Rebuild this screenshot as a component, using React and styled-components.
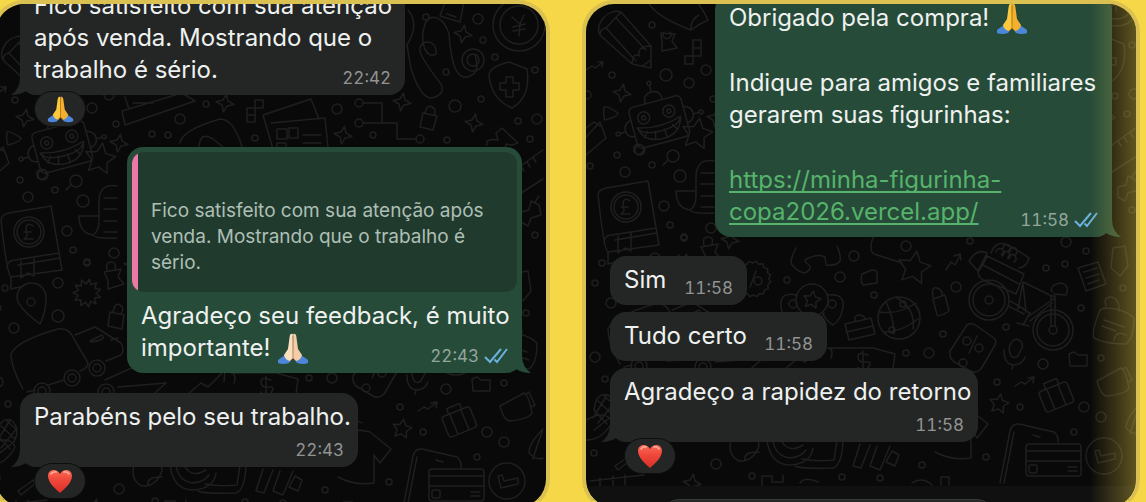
import React from "react";
import styled, { createGlobalStyle, css } from "styled-components";

const GlobalStyle = createGlobalStyle`
  *, *::before, *::after { box-sizing: border-box; }
  body {
    margin: 0;
    background: #f5d748;
    font-family: Inter, "Liberation Sans", sans-serif;
    -webkit-font-smoothing: antialiased;
  }
  p { margin: 0; }
`;

const Gallery = styled.main`
  display: grid;
  grid-template-columns: 1fr 1fr;
  gap: 32px;
  height: 100vh;
  padding-right: 6px;
  margin-left: -8px;
  overflow: hidden;
`;

const Panel = styled.section`
  position: relative;
  display: flex;
  flex-direction: column;
  height: calc(100vh + 9px);
  min-width: 0;
  border: 4px solid #dac151;
  border-bottom-color: #e8cd4c;
  border-radius: 32px;
  background: #090909;
  overflow: hidden;
`;

const Wallpaper = styled.svg`
  position: absolute;
  inset: 0;
  width: 100%;
  height: 100%;
  fill: none;
  stroke: #1f1f1f;
  stroke-width: 1.5;
  stroke-linecap: round;
  stroke-linejoin: round;
`;

const EdgeFade = styled.div`
  position: absolute;
  inset: 0 0 0 auto;
  width: 46px;
  background: linear-gradient(to right, rgba(245, 215, 72, 0), rgba(245, 215, 72, 0.36));
  pointer-events: none;
`;

const Thread = styled.div`
  position: relative;
  flex: 1;
  min-height: 0;
  display: flex;
  flex-direction: column;
  justify-content: flex-end;
  padding: 0 24px ${(p) => p.$bottom}px;
`;

const Message = styled.article`
  display: flex;
  flex-direction: column;
  align-items: ${(p) => (p.$sent ? "flex-end" : "flex-start")};
  margin-top: ${(p) => p.$gap || 20}px;
`;

const layouts = {
  overlay: css`
    display: grid;
    grid-template-columns: minmax(0, 1fr);
    > * { grid-area: 1 / 1; }
  `,
  stacked: css`
    display: grid;
    grid-template-columns: minmax(0, 1fr);
    row-gap: 5px;
  `,
  inline: css`
    display: flex;
    align-items: flex-end;
    justify-content: space-between;
  `,
};

const Bubble = styled.div`
  position: relative;
  width: ${(p) => p.$width}px;
  max-width: 100%;
  padding: ${(p) => (p.$quoted ? "5px" : "8px")} 0 7px;
  border-radius: 16px;
  background: ${(p) => (p.$sent ? "#264b39" : "#242625")};
`;

const Body = styled.div`
  padding: 0 14px;
  ${(p) => layouts[p.$layout]}
`;

const Text = styled.div`
  margin-bottom: 2px;
  color: #eef1ef;
  font-size: 24px;
  line-height: 32px;
  white-space: nowrap;

  p + p { margin-top: 33px; }
`;

const Meta = styled.footer`
  display: flex;
  align-items: center;
  gap: 5px;
  align-self: end;
  justify-self: end;
  color: ${(p) => (p.$sent ? "#93a69c" : "#929393")};
  font-size: 17px;
  line-height: 20px;
  font-variant-numeric: tabular-nums;
`;

const Link = styled.a`
  color: #57b36b;
  text-decoration: underline;
  text-decoration-thickness: 2px;
  text-underline-offset: 3px;
  text-decoration-skip-ink: none;
`;

const Quote = styled.blockquote`
  margin: 0 5px 8px;
  padding: 46px 12px 16px 19px;
  border-radius: 12px;
  background: linear-gradient(to right, #ec78a5 6px, #203b2e 6px);
  color: #aebfb5;
  font-size: 19px;
  line-height: 26px;
  white-space: nowrap;
`;

const Tail = styled.svg`
  position: absolute;
  bottom: 0;
  ${(p) => (p.$sent ? "right: -9px;" : "left: -9px; transform: scaleX(-1);")}
  width: 26px;
  height: 18px;
  fill: ${(p) => (p.$sent ? "#264b39" : "#242625")};
`;

const Reaction = styled.button`
  position: relative;
  display: flex;
  align-items: center;
  justify-content: center;
  width: 52px;
  height: 36px;
  margin: -4px 0 0 14px;
  padding: 0;
  border: 1px solid #0d0e0e;
  border-radius: 18px;
  background: #242625;
`;

const Ticks = styled.svg`
  width: 24px;
  height: 16px;
  fill: none;
  stroke: #6bb2dc;
  stroke-width: 2;
`;

const Emoji = styled.svg`
  display: inline-block;
  width: ${(p) => p.$size}px;
  height: ${(p) => p.$size}px;
  margin: -4px 0;
  vertical-align: -5px;
`;

const Composer = styled.form`
  position: relative;
  display: flex;
  height: 21px;
  padding: 13px 140px 0 74px;
  background: #101010;
`;

const Field = styled.input`
  flex: 1;
  min-width: 0;
  height: 40px;
  border: 1px solid #373838;
  border-radius: 20px;
  background: #262727;
  color: #eef1ef;
  font: inherit;
`;

const star = (x, y, r, points, inner) =>
  Array.from({ length: points * 2 }, (_, i) => {
    const a = (i * Math.PI) / points - 1.4;
    const d = i % 2 ? r * inner : r;
    return `${i ? "L" : "M"}${(x + d * Math.cos(a)).toFixed(1)} ${(y + d * Math.sin(a)).toFixed(1)}`;
  }).join("") + "Z";

const dots = [
  [86, 75, 6], [126, 70, 5], [109, 83, 5], [32, 75, 3], [72, 25, 3], [37, 155, 3], [72, 165, 3], [45, 172, 5],
  [60, 150, 5], [93, 156, 6], [100, 176, 6], [84, 206, 5], [90, 225, 3], [104, 238, 3], [131, 228, 5], [7, 95, 4],
  [197, 94, 5], [223, 79, 3], [169, 109, 3], [185, 110, 3], [133, 99, 3], [272, 113, 3], [10, 166, 3],
  [443, -8, 3], [495, -6, 5], [500, 15, 3], [490, 35, 11], [490, 35, 6], [512, 32, 3], [463, 47, 3], [552, 45, 3],
  [472, 81, 6], [498, 74, 3], [535, 96, 3], [554, 94, 5], [464, 115, 3], [547, 114, 3], [354, 84, 5], [390, 110, 3],
  [75, 258, 5], [104, 237, 3], [75, 291, 6], [31, 303, 5], [25, 379, 3], [22, 263, 3], [15, 283, 3], [15, 357, 5],
  [326, 353, 3], [349, 353, 5], [463, 364, 5], [521, 358, 3], [417, 382, 3], [440, 407, 3], [504, 407, 5],
  [521, 417, 5], [494, 432, 3], [406, 457, 3], [342, 465, 3], [300, 478, 3], [136, 464, 5], [172, 476, 3],
  [262, 477, 3], [14, 453, 3], [274, 256, 5], [260, 277, 5], [207, 280, 3], [294, 295, 3], [376, 287, 5],
  [466, 268, 3], [485, 264, 3], [501, 308, 3], [426, 327, 3], [363, 334, 3], [543, 288, 3], [552, 210, 3],
  [446, 232, 3], [486, 242, 5], [390, 241, 3], [326, 246, 5], [506, 251, 3],
];

const sparkles = [
  [42, 93], [242, 78], [480, 9], [419, 77], [491, 98], [360, 110], [150, 240], [112, 483], [136, 118],
];

function Doodles({ x, y }) {
  return (
    <Wallpaper viewBox={`${x} ${y} 550 503`} preserveAspectRatio="xMinYMin slice" aria-hidden="true">
      {dots.map(([cx, cy, r], i) => (
        <circle key={i} cx={cx} cy={cy} r={r} />
      ))}
      {sparkles.map(([cx, cy], i) => (
        <path key={i} d={star(cx, cy, 9, 4, 0.4)} />
      ))}
      {/* pencil */}
      <path d="M20 35C14 24 28 8 41 12L71 46V68L52 64L20 35M20 35Q20 29 26 28L41 12M26 28L56 61M36 18L66 50M52 64Q53 52 59 56Q57 46 71 46M62 66L71 60" />
      {/* capsule and blocks */}
      <path d="M68 2Q76 17 111 30Q119 24 128 20Q121 6 115 0M111 30Q110 20 119 15M90 32a4 4 0 1 1-6 0M81 33l14 1-3 7 5 7-15 3v-8z" />
      <path d="M113 40h8v16h-8zM113 48h8M105 56h8v8h-8zM264 83h8v14h-8zM272 75h8v8h-8zM264 90h8" />
      <path d="M6 70l6-4 3 2 7-5M18 62l5 0-1 5M24 107q2-2 14 6q0 4-13 7q-2-3-1-13zM6 137l14-15L26 138 6 155M6 128l8-6 6 4" />
      {/* robot */}
      <g transform="translate(79 121) rotate(-15)">
        <rect x="-27" y="-20" width="54" height="42" rx="5" />
        <circle cx="-14" cy="-7" r="6" /><circle cx="-14" cy="-7" r="2" />
        <circle cx="12" cy="-7" r="6" /><circle cx="12" cy="-7" r="2" />
        <path d="M-23 1Q-1 8 22 1Q18 18 0 18Q-19 18-23 1M-23 1Q-20 10 0 10Q19 10 22 1M-14 7l-4 6M-6 9l-2 8M3 9l1 9M12 7l4 6M-9-20q0-10 9-10t9 10M0-30v-7M-27-8q-8 2-8 9t8 8M27-8q8 2 8 9t-8 8M-35 2h-6M35 2h6" />
        <circle cx="0" cy="-39" r="2" /><circle cx="-43" cy="2" r="2" /><circle cx="43" cy="2" r="2" />
        <circle cx="-27" cy="22" r="5" />
      </g>
      <path d={star(117, 134, 16, 5, 0.5)} />
      <path d="M88 160l-5 5" />
      {/* book and scroll */}
      <path d="M26 188L68 181L79 245L28 252Q24 250 18 195Q18 190 26 188M24 243q0-8 8-8l44-7M28 252v12l13-3M38 236v17l7-5 6 3v-18M35 240l42-7" />
      <circle cx="46" cy="207" r="15" /><circle cx="46" cy="207" r="12" />
      <path d="M50 201q-5-4-7 1l1 9-3 3h9M41 207h7" />
      <path d="M134 161q-18-3-18 16v19q0 10-6 14q-14-2-14-19h19M110 210q2 4 24 3M121 173h13M121 184h13M121 196h13M121 207h13" />
      {/* machine, cap, calculator */}
      <path d="M139 86l60-18 13 8-70 24zM142 72l4 12M150 78h20M197 118q2-13 40-24 14 0 22 28M216 122q1-16 14-8l10 8M280 90l48-16 8 20M280 90l10 34M288 98l54-5 3 30M294 104h10v10h-10zM306 103h9v10h-9zM320 110h18M320 118h18M294 118h9v9h-9z" />
      {/* circuit */}
      <circle cx="376" cy="78" r="4" /><circle cx="376" cy="98" r="4" /><circle cx="437" cy="114" r="4" />
      <path d="M380 78h19v20M380 98h34v16h19" />
      {/* cord, receipt, coin, shield */}
      <path d="M425-15q12 14-1 35l4 24q10 30 21 29 14-4 9-14-20-26-21-33c-2-12 18-13 16 3-10 6-17-12-11-30 6-12 19-7 24 10q3 46 18 43 14-3 8-22M461-20l-4 11 20 6 4-20M464-11l9 3" />
      <circle cx="536" cy="0" r="26" /><circle cx="536" cy="0" r="19" />
      <path d="M529-8l8 7 4-9M537-1l-1 12M530 2l12-3M530 6l12-2M526 37l18 7q4 28-15 39-21-9-23-33 0-8 20-13z" />
      <path d="M523 52h7v6h6v7h-6v7h-7v-7h-6v-7h6z" />
      <path d="M440 88l14 3-4 14-13-3zM442 88q2-9 7-6t2 8M504 120q-2-7 11-5l-2-7 6-5 16 15-6 2-6-1-1 6M532 145l28-20M532 172l28-18M538 141l3 5M544 137l3 5M550 132l3 5M538 187l8-2 2-9 8 4 2 10-10 3-3 8-7-4zM552 177l4-6" />
      {/* burst, place mark, small pins */}
      <path d={star(104, 268, 14, 11, 0.65)} />
      <path d="M57 299Q34 282 34 272a14 14 0 0 1 29 1q0 14-6 26z" /><circle cx="48" cy="277" r="4" />
      <path d="M127 287l14 3-2 14-14-3zM130 287q2-10 7-7t1 9M121 247l17-3-3 8 6 7-16 5v-9zM124 245q-2-8 4-8t4 7" />
      {/* lorry */}
      <path d="M40 364Q28 342 28 329q5-13 47-25 11-2 16 10l14 24q0 5-8 8M81 355l-16 5M52 365l-8 2M92 310l20-8 26 16q4 7 0 12l-15 6M107 316l12-6q5 5-11 7zM135 313l-7 2" />
      {[[89, 353], [114, 343], [59, 366], [123, 367]].map(([cx, cy]) => (
        <g key={cx}><circle cx={cx} cy={cy} r="8" /><circle cx={cx} cy={cy} r="4" /></g>
      ))}
      <path d="M122 355l40-18M135 362l48-4-20 18M204 370l14-12 7 4 14-14M230 347l12-1-1 11M251 358q3-9-3-10h45l22 6-4 30M288 355q-10-4-10 2t8 5 0 8q-6 1-8-3M283 351v22" />
      {/* corn */}
      <path d="M14 410q2-18 14-15 10 8 3 22L14 430M6 420q20-11 26 2Q23 440 6 440M14 410l13 14M18 401l14 13M24 396l9 8M27 395l-14 23M34 403l-16 20" />
      {/* badges and pins */}
      <path d={star(173, 279, 18, 16, 0.88)} /><circle cx="178" cy="281" r="4" /><path d="M170 287l6-16" />
      <circle cx="232" cy="300" r="16" /><path d={star(232, 300, 9, 5, 0.5)} />
      <path d="M217 295q-18-4-16 12 1 12 14 20M247 295q18-2 16 12-2 13-10 18-8-5-10-12M218 312q6 9 14 10t12-9" /><circle cx="213" cy="304" r="4" /><circle cx="252" cy="304" r="4" />
      <path d="M265 324l26-6 4 16-26 6zM266 332l27-6M275 321q-1-6 4-6t6 4" />
      <path d="M216 248q-8 15-3 18 5 6 12 7 6-3 5-7-5-4-5-6 12-7 20-3l1 8q11 1 14-4 1-7-3-15M282 274l10-4q5 0 5 3v10l-14 2q-3-4-1-11M294 235q-6 15 0 19l28 9" />
      <path d={star(334, 268, 17, 5, 0.5)} />
      <circle cx="319" cy="318" r="21" /><path d="M306 302q8 16 8 32M316 297q20 12 17 32M300 312q18 3 36-9M304 332q18 0 34-13" />
      <circle cx="323" cy="304" r="3" /><circle cx="312" cy="330" r="3" />
      <path d="M353 299l12-4 4 16q-9 6-12 4zM353 297q-2-11 4-9t5 7M366 270l5-8 4 3 5-10M374 256l6-2 1 6" />
      {/* cargo bike */}
      <circle cx="409" cy="300" r="20" /><circle cx="409" cy="300" r="16" /><circle cx="409" cy="300" r="4" />
      <circle cx="473" cy="330" r="20" /><circle cx="473" cy="330" r="16" /><circle cx="473" cy="330" r="4" />
      <path d="M471 326v-30h4v30M472 296l-29-14-5 27M475 298l-26 18M472 303l-22 18M443 284l3 28M428 306l16 8M430 301l14 8M398 272q6-8 9-16l37 18-8 20q-14-7-28-12-10-3-10-10zM403 265l36 19M389 261q8-13 18-8l-9 18zM472 292q-3-7 9-9 9 2 5 12l-12-1M444 310l6 3-7 12M437 323l12 3" />
      <path d="M411 253q5-13 16-8t22 13q-2 9-10 10M416 252a4 4 0 1 1 6 4 4 4 0 1 1 6 3 4 4 0 1 1 6 3M423 248a4 4 0 1 1 6 4 4 4 0 1 1 6 3" />
      <path d="M387 325q4-3 10 1l17 12q3 4 1 7l-14 24q-5 5-11 2l-17-10q-4-4-3-10z" /><circle cx="387" cy="341" r="4" /><circle cx="399" cy="348" r="4" /><circle cx="383" cy="363" r="4" /><path d="M389 353l8-17" />
      <path d="M429 348q3-9 8-9 7 3 5 9l-4 8q-8 5-9-8M424 350q0 14 9 15 9 0 12-8M433 365l-1 4M435 386l6-4 4 2 8-6M448 378l6-1-1 6M489 354l5-2 4 3h9v11h-17z" />
      <path d="M498 268l20-6 8 22-20 7zM504 272l13-4M506 278l13-4M508 284l11-4M533 248l12-2 3 20-8 10-9-8zM520 310q-9 22-6 28 10 6 32 6 8-6 8-26-10-10-30-10zM524 320l20 7M522 326l14 5M526 306q-3-10 6-9 8 3 7 14M534 340q2-10 12-5" />
      <path d="M517 381l24-13q4 0 8 20-3 6-22 8-6 0-10-15zM542 370l4-3 6 13-4 2M560 404q-14 14-14 24 8 8 14 5M560 404q-6 16-10 30" />
      {/* luggage */}
      <g transform="rotate(-22 476 396)"><rect x="461" y="386" width="30" height="22" rx="3" /><path d="M470 386v22M482 386v22M469 386v-6h14v6" /></g>
      <path d={star(419, 404, 10, 5, 0.5)} />
      {/* phone, card, clock */}
      <path d="M420 483l10-52q2-8 9-7l35 8q5 4 4 11M424 483l10-51M453 435l7 2" />
      <rect x="446" y="444" width="55" height="32" rx="3" /><path d="M446 451h55M446 461h55M488 467h9M488 471h9" /><rect x="449" y="465" width="8" height="8" rx="2" />
      <circle cx="524" cy="456" r="18" /><path d="M515 451l4-1 2 6 14-3v6l-17 4z" />
      {/* shirt and bottom row */}
      <path d="M355 452q17 9 36 6v-28l6 8 11-14-21-17-11-2q-7 8-14-2l-11 10M371 400q3-6 8-2M280 444l-7 22 8 2 9-23M297 446l-7 20 10 4 10-24M312 451l7 4-4 11-9-4z" />
      <path d="M151 440q-4 15 8 21 14 1 20-15l-1-8M165 460q-1-9 14-8M187 440q3 24 22 25 22-1 24-17M193 440q2 16 17 18 11-1 16-8M201 440q7 14 22 5M215 466q5 3 38 2 9-3 10-27M222 459q14 3 32 1l3-20M38 470l-3-4 17-12 2 3zM49 455l16 14M58 451q-3-2-1-4l11 8M10 481l54-6M20 478v8M33 476v10M45 475v10M182 486v-10h10v6h11v-7M220 483q5-7 18-1M332 483q10-7 20 2M361 485v-8h8v8" />
    </Wallpaper>
  );
}

function Hands({ size = 32, pale }) {
  const left = pale ? "#fbe0bf" : "#fcc93c";
  const right = pale ? "#f3cda7" : "#f2b02e";
  return (
    <Emoji $size={size} viewBox="0 0 32 32" role="img" aria-label="mãos juntas">
      <path d="M1 27L8 22L15 26L12 30Q6 32 1 30Z" fill="#4c86d8" />
      <path d="M31 27L24 22L17 26L20 30Q26 32 31 30Z" fill="#4c86d8" />
      <path d="M15.800 1Q13 0 12.600 4L11 16L7 22Q8 27 13 28L16 25Z" fill={left} />
      <path d="M16.200 1Q19 0 19.400 4L21 16L25 22Q24 27 19 28L16 25Z" fill={right} />
      <path d="M16 3V25L13 28M16 25L19 28" fill="none" stroke={pale ? "#b78567" : "#c27a16"} strokeWidth="1" />
    </Emoji>
  );
}

function Heart() {
  return (
    <Emoji $size={26} viewBox="0 0 26 26" role="img" aria-label="coração">
      <defs>
        <linearGradient id="heartFill" x1="0" y1="0" x2="0" y2="1">
          <stop offset="0" stopColor="#fb6a56" />
          <stop offset="0.4" stopColor="#f04a3c" />
          <stop offset="1" stopColor="#d92f28" />
        </linearGradient>
      </defs>
      <path d="M13 25C9 21 1 15 1 8C1 1 10 0 13 6C16 0 25 1 25 8C25 15 17 21 13 25Z" fill="url(#heartFill)" />
      <path d="M4 6Q6 3 9 4M17 4Q20 3 22 6" fill="none" stroke="#ffb3a2" strokeWidth="1.500" strokeLinecap="round" />
    </Emoji>
  );
}

function Stamp({ time, sent }) {
  return (
    <Meta $sent={sent}>
      <time>{time}</time>
      {sent && (
        <Ticks viewBox="0 0 24 16" role="img" aria-label="lida">
          <path d="M1 9l5 5L17 1M10.500 11.500l2.500 2.500L23 1" />
        </Ticks>
      )}
    </Meta>
  );
}

function Chat({ sent, width, layout = "overlay", time, tail = true, quote, gap, reaction, children }) {
  return (
    <Message $sent={sent} $gap={gap}>
      <Bubble $sent={sent} $width={width} $quoted={!!quote}>
        {tail && (
          <Tail $sent={sent} viewBox="0 0 26 18" aria-hidden="true">
            <path d="M8 0H17Q17 12 26 18Q17 18 11 14L4 18Z" />
          </Tail>
        )}
        {quote && <Quote>{quote}</Quote>}
        <Body $layout={layout}>
          <Text>{children}</Text>
          <Stamp time={time} sent={sent} />
        </Body>
      </Bubble>
      {reaction && <Reaction type="button">{reaction}</Reaction>}
    </Message>
  );
}

export default function App() {
  return (
    <>
      <GlobalStyle />
      <Gallery>
        <Panel>
          <Doodles x={13} y={-21} />
          <Thread $bottom={8}>
            <Chat width={385} time="22:42" reaction={<Hands size={27} />}>
              <p>
                Fico satisfeito com sua atenção
                <br />
                após venda. Mostrando que o
                <br />
                trabalho é sério.
              </p>
            </Chat>
            <Chat
              sent
              width={395}
              time="22:43"
              quote={
                <p>
                  Fico satisfeito com sua atenção após
                  <br />
                  venda. Mostrando que o trabalho é
                  <br />
                  sério.
                </p>
              }
            >
              <p>
                Agradeço seu feedback, é muito
                <br />
                importante! <Hands pale />
              </p>
            </Chat>
            <Chat width={338} layout="stacked" time="22:43" reaction={<Heart />}>
              <p>Parabéns pelo seu trabalho.</p>
            </Chat>
          </Thread>
        </Panel>

        <Panel>
          <Doodles x={6} y={4} />
          <Thread $bottom={12}>
            <Chat sent width={397} time="11:58">
              <p>
                Obrigado pela compra! <Hands />
              </p>
              <p>
                Indique para amigos e familiares
                <br />
                gerarem suas figurinhas:
              </p>
              <p>
                <Link href="https://minha-figurinha-copa2026.vercel.app/">
                  https://minha-figurinha-
                  <br />
                  copa2026.vercel.app/
                </Link>
              </p>
            </Chat>
            <Chat width={137} layout="inline" time="11:58" tail={false} gap={19}>
              <p>Sim</p>
            </Chat>
            <Chat width={217} layout="inline" time="11:58" tail={false} gap={7}>
              <p>Tudo certo</p>
            </Chat>
            <Chat width={368} layout="stacked" time="11:58" gap={7} reaction={<Heart />}>
              <p>Agradeço a rapidez do retorno</p>
            </Chat>
          </Thread>
          <Composer>
            <Field type="text" aria-label="Mensagem" />
          </Composer>
          <EdgeFade />
        </Panel>
      </Gallery>
    </>
  );
}
